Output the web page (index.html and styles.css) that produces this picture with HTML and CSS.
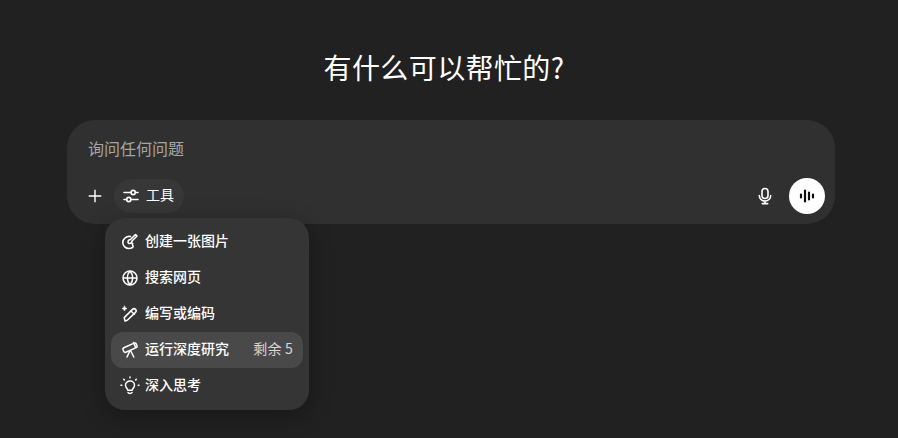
FILE: index.html
```html
<!DOCTYPE html>
<html lang="zh-CN">
<head>
    <meta charset="UTF-8">
    <title>有什么可以帮忙的?</title>
    <link rel="stylesheet" href="styles.css">
</head>
<body>
    <main class="page">
        <h1 class="title">有什么可以帮忙的?</h1>

        <!-- Composer -->
        <section class="composer">
            <p class="placeholder">询问任何问题</p>
            <div class="toolbar">
                <button class="icon-btn plus-btn" aria-label="添加">
                    <svg width="18" height="18" viewBox="0 0 18 18" fill="none" stroke="currentColor" stroke-width="1.600" stroke-linecap="round"><path d="M9 2.500v13M2.500 9h13"/></svg>
                </button>
                <button class="tools-btn">
                    <svg width="18" height="18" viewBox="0 0 18 18" fill="none" stroke="currentColor" stroke-width="1.600" stroke-linecap="round"><path d="M2 5.500h7M13.400 5.500h2.600M2 12.500h2.600M9 12.500h7"/><circle cx="11.200" cy="5.500" r="2.100"/><circle cx="6.800" cy="12.500" r="2.100"/></svg>
                    <span class="label">工具</span>
                </button>
                <div class="toolbar-right">
                    <button class="icon-btn mic-btn" aria-label="听写">
                        <svg width="20" height="20" viewBox="0 0 20 20" fill="none" stroke="currentColor" stroke-width="1.600" stroke-linecap="round"><rect x="7" y="2.500" width="6" height="10" rx="3"/><path d="M4.300 9.500c0 3.200 2.500 5.600 5.700 5.600s5.700-2.400 5.700-5.600M10 15.100v2.400M7.300 17.600h5.400"/></svg>
                    </button>
                    <button class="voice-btn" aria-label="语音">
                        <svg width="20" height="20" viewBox="0 0 20 20" fill="none" stroke="#0d0d0d" stroke-width="2.200" stroke-linecap="round"><path d="M4 8.500v3M8 4.500v11M12 6.500v7M16 8.500v3"/></svg>
                    </button>
                </div>
            </div>

            <!-- Tools menu -->
            <ul class="menu">
                <li class="menu-item">
                    <svg class="menu-icon" viewBox="0 0 18 18" fill="none" stroke="currentColor" stroke-width="1.600" stroke-linecap="round" stroke-linejoin="round"><path d="M9.500 3.500C5.600 2.800 1.800 5.600 1.800 9.500c0 3.500 3 6 6.200 6 2.400 0 4.600-1 4-2.500-.4-1-1-1.500-.4-2.500"/><path d="M7 9.200c0-1.500 1-2.700 2.500-2.700l5-5 1.500 1.500-5 5c0 1.500-1 2.500-2.500 2.500-.6 0-1.500-.6-1.500-1.300z"/></svg>
                    <span class="label">创建一张图片</span>
                </li>
                <li class="menu-item">
                    <svg class="menu-icon" viewBox="0 0 18 18" fill="none" stroke="currentColor" stroke-width="1.500"><circle cx="9" cy="9" r="7"/><path d="M2 9h14M9 2c-3.600 4-3.600 10 0 14M9 2c3.600 4 3.600 10 0 14"/></svg>
                    <span class="label">搜索网页</span>
                </li>
                <li class="menu-item">
                    <svg class="menu-icon" viewBox="0 0 18 18" fill="none" stroke="currentColor" stroke-width="1.500" stroke-linecap="round" stroke-linejoin="round"><path d="M4 16l-.8-3.400 8.300-8.200c.8-.8 2.200-.8 3 0s.8 2.200 0 3l-8.200 7.800z"/><path d="M10 6l3.300 3.300"/><path d="M3.500 1l.8 1.700 1.700.8-1.700.8-.8 1.700-.8-1.700L1 3.500l1.700-.8z" fill="currentColor" stroke-width=".6"/></svg>
                    <span class="label">编写或编码</span>
                </li>
                <li class="menu-item is-active">
                    <svg class="menu-icon" viewBox="0 0 18 18" fill="none" stroke="currentColor" stroke-width="1.500" stroke-linecap="round" stroke-linejoin="round"><rect x="1.800" y="4.200" width="14.400" height="5" rx="1.500" transform="rotate(-24 9 6.700)"/><path d="M12.500 1.500l2 4.600M8.800 10l-2.800 6M9.800 10l3 6"/></svg>
                    <span class="label">运行深度研究</span>
                    <span class="menu-meta">剩余 5</span>
                </li>
                <li class="menu-item">
                    <svg class="menu-icon bulb" viewBox="0 0 20 20" fill="none" stroke="currentColor" stroke-width="1.500" stroke-linecap="round" stroke-linejoin="round"><path d="M7.800 14.200c0-1.400-2.300-2.400-2.300-5 0-2.400 2-4.200 4.500-4.200s4.500 1.800 4.500 4.200c0 2.600-2.300 3.600-2.300 5z"/><path d="M8 16.500c.5 1.200 3.500 1.200 4 0M10 1v.8M3.700 3.300l.6.600M16.300 3.300l-.6.600M1 9.300h.8M18.200 9.300h.8"/></svg>
                    <span class="label">深入思考</span>
                </li>
            </ul>
        </section>
    </main>
</body>
</html>
```

FILE: styles.css
```css
* {
    margin: 0;
    padding: 0;
    box-sizing: border-box;
}

body {
    background-color: #212121;
    color: #fff;
    font-family: "Noto Sans CJK SC", "Liberation Sans", sans-serif;
    overflow: hidden;
}

.page {
    display: flex;
    flex-direction: column;
    align-items: center;
    padding-left: 4px;
    padding-top: 46px;
    height: 438px;
}

.title {
    font-size: 28px;
    font-weight: 400;
    line-height: 42px;
    letter-spacing: 0.4px;
    margin-right: 14px;
    margin-bottom: 32px;
}

/* Composer */
.composer {
    position: relative;
    width: 768px;
    height: 104px;
    background-color: #303030;
    border-radius: 28px;
    padding: 15px 10px 10px 21px;
}

.placeholder {
    color: #a5a5a5;
    font-size: 16px;
    line-height: 26px;
}

.toolbar {
    display: flex;
    align-items: center;
    margin-top: 17px;
    height: 36px;
}

button {
    border: none;
    background: none;
    color: inherit;
    font: inherit;
}

.icon-btn {
    display: flex;
    align-items: center;
    justify-content: center;
}

.plus-btn {
    width: 16px;
    margin-left: -1px;
    margin-right: 11px;
}

.tools-btn {
    display: flex;
    align-items: center;
    gap: 6px;
    height: 34px;
    padding: 0 10px 0 8px;
    background-color: #373737;
    border-radius: 17px;
    font-size: 14px;
}

.label {
    padding-bottom: 5px;
}

.toolbar-right {
    display: flex;
    align-items: center;
    gap: 14px;
    margin-left: auto;
}

.mic-btn {
    width: 20px;
}

.voice-btn {
    display: flex;
    align-items: center;
    justify-content: center;
    width: 36px;
    height: 36px;
    background-color: #fff;
    border-radius: 50%;
}

/* Tools menu */
.menu {
    position: absolute;
    left: 38px;
    top: 98px;
    width: 204px;
    padding: 6px;
    list-style: none;
    background-color: #353535;
    border-radius: 20px;
    box-shadow: 0 6px 24px rgba(0, 0, 0, 0.3);
}

.menu-item {
    display: flex;
    align-items: center;
    gap: 6px;
    height: 36px;
    padding: 0 10px;
    border-radius: 12px;
    font-size: 14px;
    font-weight: 500;
}

.menu-icon {
    width: 18px;
    height: 18px;
    flex-shrink: 0;
}

.menu-icon.bulb {
    width: 20px;
    height: 20px;
    margin-left: -1px;
    margin-right: -1px;
}

.is-active {
    background-color: #494949;
}

.menu-meta {
    margin-left: auto;
    padding-bottom: 5px;
    font-weight: 400;
    letter-spacing: 0.2px;
    color: #d6d6d6;
}
```
